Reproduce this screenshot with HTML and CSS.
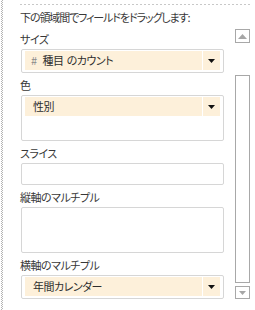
FILE: index.html
```html
<!DOCTYPE html>
<html lang="ja">
<head>
<meta charset="UTF-8">
<title>フィールド リスト</title>
<link rel="stylesheet" href="styles.css">
</head>
<body>
<div class="field-pane">
  <div class="areas">
    <div class="area-list">
      <p class="hint">下の領域間でフィールドをドラッグします:</p>

      <section class="area">
        <h3 class="area-title">サイズ</h3>
        <div class="drop-zone">
          <div class="field-chip">
            <span class="chip-name"><span class="chip-hash">#</span>種目<span class="chip-space"> </span>のカウント</span>
            <span class="chip-arrow"><svg width="7" height="4" viewBox="0 0 7 4"><polygon points="0,0 7,0 3.5,4" fill="#111"/></svg></span>
          </div>
        </div>
      </section>

      <section class="area">
        <h3 class="area-title">色</h3>
        <div class="drop-zone zone-tall">
          <div class="field-chip">
            <span class="chip-name name-plain">性別</span>
            <span class="chip-arrow"><svg width="7" height="4" viewBox="0 0 7 4"><polygon points="0,0 7,0 3.5,4" fill="#111"/></svg></span>
          </div>
        </div>
      </section>

      <section class="area">
        <h3 class="area-title">スライス</h3>
        <div class="drop-zone zone-empty"></div>
      </section>

      <section class="area">
        <h3 class="area-title">縦軸のマルチプル</h3>
        <div class="drop-zone zone-tall"></div>
      </section>

      <section class="area">
        <h3 class="area-title">横軸のマルチプル</h3>
        <div class="drop-zone">
          <div class="field-chip">
            <span class="chip-name name-plain">年間カレンダー</span>
            <span class="chip-arrow"><svg width="7" height="4" viewBox="0 0 7 4"><polygon points="0,0 7,0 3.5,4" fill="#111"/></svg></span>
          </div>
        </div>
      </section>
    </div>

    <div class="scrollbar">
      <div class="scroll-btn btn-up"><svg width="9" height="5" viewBox="0 0 9 5"><polygon points="4.5,0 9,5 0,5" fill="#a6a6a6"/></svg></div>
      <div class="scroll-thumb"></div>
      <div class="scroll-btn btn-down"><svg width="7" height="4" viewBox="0 0 7 4"><polygon points="0,0 7,0 3.5,4" fill="#a6a6a6"/></svg></div>
    </div>
  </div>
</div>
</body>
</html>
```

FILE: styles.css
```css
body {
    margin: 0;
    font-family: "Noto Sans CJK JP", sans-serif;
    font-size: 11px;
    letter-spacing: -0.5px;
    color: #383838;
    background-color: #fff;
    /* dotted splitter on the left edge */
    background-image: conic-gradient(#b4b4b4 25%, transparent 0 50%, #b4b4b4 0 75%, transparent 0);
    background-position: 1px 0;
    background-size: 2px 2px;
    background-repeat: repeat-y;
    font-feature-settings: "palt";
}

.field-pane {
    height: 310px;
    box-sizing: border-box;
    padding: 4px 5px 0 20px;
}

.areas {
    display: flex;
    padding-top: 1px;
    background-image: linear-gradient(to right, #c8c8c8 2px, transparent 2px);
    background-size: 4px 1px;
    background-repeat: repeat-x;
}

.area-list {
    width: 204px;
}

.hint {
    margin: 0;
    padding-top: 5px;
    line-height: 14px;
    letter-spacing: -1.1px;
    white-space: nowrap;
}

.area {
    margin-top: 5px;
}

.hint + .area {
    margin-top: 8px;
}

.area-title {
    margin: 0 0 3px;
    font-size: 11px;
    font-weight: normal;
    line-height: 14px;
}

.drop-zone {
    margin-left: 1px;
    border: 1px solid #d6d6d6;
    border-radius: 2px;
    padding: 1px 3px 2px 3px;
    box-sizing: border-box;
}

.zone-tall {
    height: 46px;
}

.zone-empty {
    height: 22px;
}

.field-chip {
    display: flex;
    gap: 1px;
    height: 19px;
    line-height: 19px;
    color: #2e2e2e;
}

.chip-name {
    flex: 1;
    background-color: #fdf0da;
    padding-left: 6px;
    white-space: nowrap;
}

.name-plain {
    padding-left: 8px;
}

.chip-hash {
    color: #8a8a8a;
    margin-right: 6px;
}

.chip-space {
    display: inline-block;
    width: 3px;
}

.chip-arrow {
    width: 17px;
    background-color: #fdf0da;
    display: flex;
    justify-content: center;
    align-items: center;
}

.scrollbar {
    width: 15px;
    margin-left: 11px;
    padding-top: 24px;
    display: flex;
    flex-direction: column;
}

.scroll-btn {
    border: 1px solid #a8a8a8;
    box-sizing: border-box;
    display: flex;
    justify-content: center;
    align-items: center;
}

.btn-up {
    height: 14px;
}

.btn-down {
    height: 13px;
    margin-top: 3px;
}

.scroll-thumb {
    margin-top: 32px;
    height: 208px;
    border: 1px solid #a8a8a8;
    box-sizing: border-box;
}
```
